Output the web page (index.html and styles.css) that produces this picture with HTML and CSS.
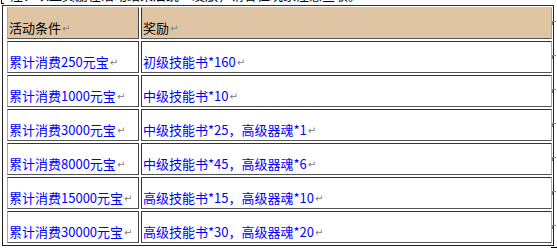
FILE: index.html
```html
<!DOCTYPE html>
<html lang="zh">
<head>
<meta charset="utf-8">
<link rel="stylesheet" href="styles.css">
</head>
<body>
<div class="clip"><span class="handle"></span><p class="clip-text">注：以上奖励在活动结束后统一发放，请各位玩家注意查收。</p></div>
<div class="table">
  <div class="cell c1 head">活动条件<span class="pm">↵</span></div>
  <div class="cell c2 head">奖励<span class="pm">↵</span></div>

  <div class="cell c1">累计消费250元宝<span class="pm">↵</span></div>
  <div class="cell c2">初级技能书*160<span class="pm">↵</span></div>

  <div class="cell c1">累计消费1000元宝<span class="pm">↵</span></div>
  <div class="cell c2">中级技能书*10<span class="pm">↵</span></div>

  <div class="cell c1">累计消费3000元宝<span class="pm">↵</span></div>
  <div class="cell c2">中级技能书*25，高级器魂*1<span class="pm">↵</span></div>

  <div class="cell c1">累计消费8000元宝<span class="pm">↵</span></div>
  <div class="cell c2">中级技能书*45，高级器魂*6<span class="pm">↵</span></div>

  <div class="cell c1">累计消费15000元宝<span class="pm">↵</span></div>
  <div class="cell c2">高级技能书*15，高级器魂*10<span class="pm">↵</span></div>

  <div class="cell c1">累计消费30000元宝<span class="pm">↵</span></div>
  <div class="cell c2">高级技能书*30，高级器魂*20<span class="pm">↵</span></div>
</div>
<div class="corner"></div>
</body>
</html>
```
FILE: styles.css
```css
html, body {
  margin: 0;
  padding: 0;
  background: #fff;
}

body {
  font-family: "Noto Sans CJK SC", "Noto Sans", sans-serif;
  font-size: 13px;
  color: #000;
}

.clip {
  height: 5px;
  overflow: hidden;
  position: relative;
}

.handle {
  position: absolute;
  left: 1px;
  top: 0;
  width: 2px;
  height: 3px;
  border-left: 1px solid #000;
  border-bottom: 1px solid #000;
}

.clip-text {
  margin: -14px 0 0 10px;
  line-height: 18px;
  white-space: nowrap;
  color: #000;
}

.table {
  box-sizing: border-box;
  width: 552px;
  margin-left: 2px;
  border: 1px solid #222;
  border-top-color: #333;
  padding: 1px 1px 2px 4px;
  display: grid;
  grid-template-columns: 132px 411px;
  grid-auto-rows: 32px;
  gap: 2px;
}

.cell {
  box-sizing: border-box;
  position: relative;
  display: flex;
  align-items: flex-end;
  padding: 0 0 3px 1px;
  line-height: 15px;
  white-space: nowrap;
  color: #0000ff;
  border-top: 1px solid #333;
  border-bottom: 1px solid #555;
}

.c1 {
  border-left: 1px solid #a8a8a8;
  border-right: 1px solid #444;
}

.c2 {
  border-left: 1px solid #333;
  border-right: 1px solid #a8a8a8;
}

.c2::after {
  content: "";
  position: absolute;
  right: -5px;
  top: 13px;
  width: 3px;
  height: 3px;
  border-left: 1px solid #888;
  border-top: 1px solid #888;
}

.head {
  background: #dfc5a4;
  color: #000;
  border-top-color: #dfc5a4;
}

.pm {
  font-family: "DejaVu Sans", sans-serif;
  font-size: 10px;
  color: #808080;
  margin-left: 1px;
  line-height: 13px;
}

.corner {
  width: 6px;
  height: 0;
  margin-left: 551px;
  margin-top: 1px;
  border-top: 1px solid #000;
}
```
